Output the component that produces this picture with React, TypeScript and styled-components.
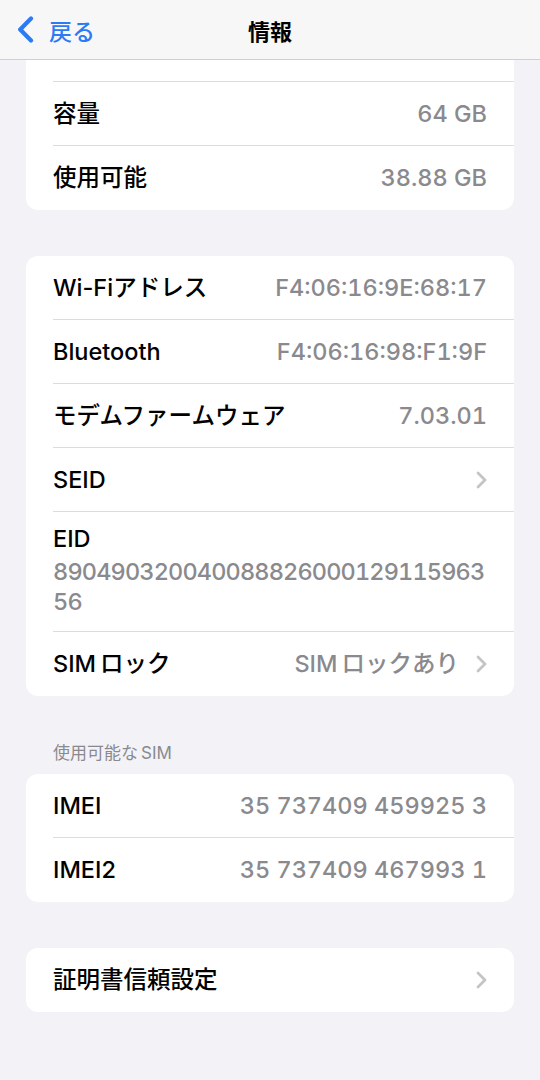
import styled, { createGlobalStyle } from "styled-components";

const GlobalStyle = createGlobalStyle`
  html, body {
    margin: 0;
    padding: 0;
    background: #f2f2f7;
  }
  body {
    font-family: Inter, "Noto Sans CJK JP", sans-serif;
    -webkit-font-smoothing: antialiased;
  }
`;

const Page = styled.div`
  width: 540px;
  min-height: 1080px;
  background: #f2f2f7;
  padding: 18px 0 60px;
  box-sizing: border-box;
`;

const NavBar = styled.header`
  position: fixed;
  top: 0;
  left: 0;
  width: 540px;
  height: 60px;
  z-index: 10;
  display: grid;
  grid-template-columns: 1fr auto 1fr;
  align-items: center;
  background: #f7f7f7;
  border-bottom: 1px solid #cfcfd2;
  box-sizing: border-box;
`;

const BackButton = styled.div`
  display: flex;
  align-items: center;
  gap: 15px;
  padding-left: 17px;
  color: #2a7bf5;
  font-size: 23px;
  font-weight: 500;
`;

const NavTitle = styled.div`
  font-size: 22px;
  font-weight: 700;
  color: #000;
`;

const Card = styled.section`
  margin: 0 26px 46px;
  background: #fff;
  border-radius: 12px;
  overflow: hidden;
`;

const Row = styled.div`
  position: relative;
  display: flex;
  align-items: center;
  justify-content: space-between;
  min-height: 64px;
  padding: 0 27px;
  box-sizing: border-box;

  &:not(:last-child)::after {
    content: "";
    position: absolute;
    bottom: 0;
    left: 27px;
    right: 0;
    height: 1px;
    background: #dcdce0;
  }
`;

const StackRow = styled(Row)`
  flex-direction: column;
  align-items: flex-start;
  justify-content: flex-start;
  padding-top: 13px;
  padding-bottom: 15px;
`;

const Label = styled.span`
  font-size: 23.5px;
  line-height: 28px;
  font-weight: 500;
  color: #000;
  white-space: nowrap;
`;

const Value = styled.span`
  display: flex;
  align-items: center;
  gap: 17px;
  font-size: 23.5px;
  line-height: 28px;
  font-weight: 500;
  color: #8a8a8e;
  font-variant-numeric: tabular-nums;
  white-space: nowrap;
`;

const LongValue = styled.div`
  margin-top: 4px;
  font-size: 23.5px;
  line-height: 30px;
  font-weight: 500;
  letter-spacing: -0.85px;
  color: #8a8a8e;
  font-variant-numeric: tabular-nums;
  word-break: break-all;
  width: 100%;
`;

const SectionHeader = styled.div`
  margin: 7px 0 10px;
  padding: 0 53px;
  font-size: 17px;
  line-height: 22px;
  color: #8a8a8e;
`;

const BackChevron = () => (
  <svg width="17" height="27" viewBox="0 0 17 27" fill="none">
    <path d="M14 2.5 L3.2 13.5 L14 24.5" stroke="#2a7bf5" strokeWidth="4.2" strokeLinecap="round" strokeLinejoin="round" />
  </svg>
);

const Chevron = () => (
  <svg width="11" height="18" viewBox="0 0 11 18" fill="none">
    <path d="M2 2 L9 9 L2 16" stroke="#c4c4c7" strokeWidth="2.8" strokeLinecap="round" strokeLinejoin="round" />
  </svg>
);

interface Item {
  label: string;
  value?: string;
  link?: boolean;
}

const storage: Item[] = [
  { label: "" },
  { label: "容量", value: "64 GB" },
  { label: "使用可能", value: "38.88 GB" },
];

const network: Item[] = [
  { label: "Wi-Fiアドレス", value: "F4:06:16:9E:68:17" },
  { label: "Bluetooth", value: "F4:06:16:98:F1:9F" },
  { label: "モデムファームウェア", value: "7.03.01" },
  { label: "SEID", link: true },
];

const sims: Item[] = [
  { label: "IMEI", value: "35 737409 459925 3" },
  { label: "IMEI2", value: "35 737409 467993 1" },
];

const renderRow = (item: Item, i?: number) => (
  <Row key={item.label || `row-${i}`}>
    <Label>{item.label}</Label>
    <Value>
      {item.value}
      {item.link ? <Chevron /> : null}
    </Value>
  </Row>
);

const App = () => {
  return (
    <>
      <GlobalStyle />
      <NavBar>
        <BackButton>
          <BackChevron />
          戻る
        </BackButton>
        <NavTitle>情報</NavTitle>
        <div />
      </NavBar>
      <Page>
        <Card>{storage.map(renderRow)}</Card>

        <Card>
          {network.map(renderRow)}
          <StackRow>
            <Label>EID</Label>
            <LongValue>89049032004008882600012911596356</LongValue>
          </StackRow>
          {renderRow({ label: "SIM\u2009ロック", value: "SIM\u2009ロックあり", link: true })}
        </Card>

        <SectionHeader>使用可能な{"\u2009"}SIM</SectionHeader>
        <Card>{sims.map(renderRow)}</Card>

        <Card>{renderRow({ label: "証明書信頼設定", link: true })}</Card>
      </Page>
    </>
  );
};

export default App;
